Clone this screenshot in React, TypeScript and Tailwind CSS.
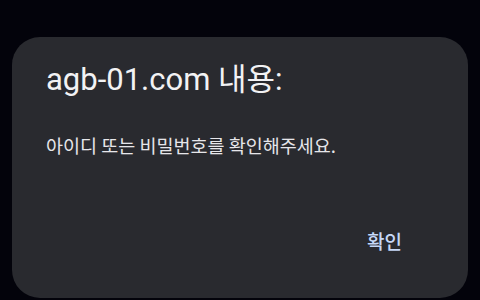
export default function App() {
  return (
    <div className="h-[300px] w-[480px] bg-[#03030b] px-3 pt-[37px] pb-[2px]">
      <div className="flex h-full flex-col rounded-[28px] bg-[#292a2f] pl-[34px] pr-[66px]">
        <h1
          className="mt-[23px] text-[31px] leading-[40px] text-[#f2f2f4]"
          style={{ fontFamily: 'Roboto, "Noto Sans CJK KR", sans-serif' }}
        >
          agb-01.com 내용:
        </h1>
        <p
          className="mt-[32px] text-[18.5px] leading-[26px] text-[#e6e6ea]"
          style={{ fontFamily: '"Noto Sans CJK KR", sans-serif' }}
        >
          아이디 또는 비밀번호를 확인해주세요.
        </p>
        <div className="mt-auto mb-[44px] flex justify-end">
          <button
            className="text-[19px] font-medium leading-[26px] text-[#c6d8f8]"
            style={{ fontFamily: '"Noto Sans CJK KR", sans-serif' }}
          >
            확인
          </button>
        </div>
      </div>
    </div>
  )
}
